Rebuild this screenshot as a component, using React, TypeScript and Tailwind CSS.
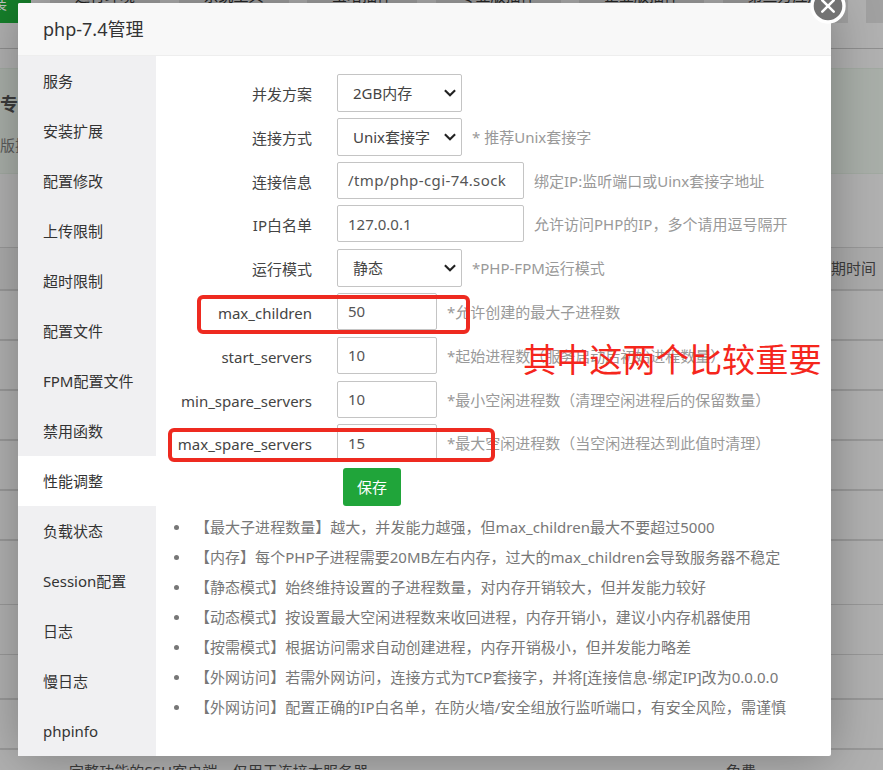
import { ReactNode } from 'react'

const MENU = [
  '服务', '安装扩展', '配置修改', '上传限制', '超时限制', '配置文件', 'FPM配置文件',
  '禁用函数', '性能调整', '负载状态', 'Session配置', '日志', '慢日志', 'phpinfo',
]

const TABS = [
  { name: '运行环境', className: 'w-[110px]' },
  { name: '系统工具', className: 'w-[110px]' },
  { name: '宝塔插件', className: 'w-[110px]' },
  { name: '专业版插件', className: 'w-[125px]' },
  { name: '企业版插件', className: 'w-[125px]' },
  { name: '第三方应用', className: 'w-[125px]' },
  { name: '一键部署', className: 'w-[110px]' },
]

const TIPS = [
  '【最大子进程数量】越大，并发能力越强，但max_children最大不要超过5000',
  '【内存】每个PHP子进程需要20MB左右内存，过大的max_children会导致服务器不稳定',
  '【静态模式】始终维持设置的子进程数量，对内存开销较大，但并发能力较好',
  '【动态模式】按设置最大空闲进程数来收回进程，内存开销小，建议小内存机器使用',
  '【按需模式】根据访问需求自动创建进程，内存开销极小，但并发能力略差',
  '【外网访问】若需外网访问，连接方式为TCP套接字，并将[连接信息-绑定IP]改为0.0.0.0',
  '【外网访问】配置正确的IP白名单，在防火墙/安全组放行监听端口，有安全风险，需谨慎',
]

function Row({ label, hint, children }: { label: string; hint?: string; children: ReactNode }) {
  return (
    <div className="flex h-[43.8px] items-start whitespace-nowrap">
      <span className="w-[156px] text-right leading-10 text-[#444]">{label}</span>
      <div className="ml-[25px]">{children}</div>
      {hint && <span className="ml-2.5 leading-[38px] text-[#999]">{hint}</span>}
    </div>
  )
}

function Select({ value }: { value: string }) {
  return (
    <div className="flex h-[38px] w-[125px] items-center justify-between rounded-xs border border-[#c4c4c4] bg-white pr-[5px] pl-[15px] text-[#444]">
      {value}
      <svg width="12" height="8" viewBox="0 0 12 8" fill="none" stroke="#222" strokeWidth="2.1">
        <path d="M0.9 1.2L6 6.3L11.1 1.2" />
      </svg>
    </div>
  )
}

function Input({ value, className = 'w-[100px]' }: { value: string; className?: string }) {
  return (
    <div className={`flex h-[37px] items-center rounded-xs border border-[#c4c4c4] bg-white pl-2.5 text-[#555] ${className}`}>
      {value}
    </div>
  )
}

// Software list page behind the dialog
function Backdrop() {
  return (
    <div className="h-full bg-[#b1b1b1] text-[#3c3c3c]">
      <div className="flex h-[49px] items-start border-b border-[#8f8f8f]">
        <div className="flex h-[23px] w-[31px] shrink-0 items-start overflow-hidden bg-[#16802b]">
          <span className="-mt-[7px] -ml-[23px] leading-5 whitespace-nowrap text-[#c2c2c2]">安装</span>
        </div>
        <div className="ml-[19px] flex shrink-0 gap-[18.5px]">
          {TABS.map((tab) => (
            <div key={tab.name} className={`h-[23px] overflow-hidden bg-[#a1a1a1] text-center text-[#262626] ${tab.className}`}>
              <div className="-mt-[15px] leading-5">{tab.name}</div>
            </div>
          ))}
        </div>
      </div>
      <div className="mt-[19px] h-[106px] overflow-hidden border-y border-[#a2aaa2] bg-[#a9afa9]">
        <div className="pt-[23px] text-[18px] leading-6 font-bold">专业版</div>
        <div className="mt-[19px] leading-5 text-[#5c5c5c]">版插件</div>
      </div>
      <div className="mt-[73px] flex h-[44px] items-center justify-end border-t border-b-2 border-[#999] bg-[#acacac] pr-[7px]">
        到期时间
      </div>
      <div className="h-[50px] border-b-2 border-[#999]" />
      <div className="h-[50px] border-b-2 border-[#999]" />
      <div className="h-[50px] border-b-2 border-[#999]" />
      <div className="h-[50px] border-b-2 border-[#999]" />
      <div className="h-[50px] border-b-2 border-[#999]" />
      <div className="h-[64px] border-b border-[#999]" />
      <div className="h-[50px] border-b border-[#999]" />
      <div className="h-[45px] border-b-2 border-[#999]" />
      <div className="h-[50px] border-b-2 border-[#999]" />
      <div className="flex pt-[11px] pl-[69px] leading-5">
        <span className="w-[657px] tracking-[0.08px]">完整功能的SSH客户端，仅用于连接本服务器</span>
        <span>免费</span>
      </div>
    </div>
  )
}

function CloseButton() {
  return (
    <svg className="absolute -top-[15px] -right-[15px]" width="36" height="36" viewBox="0 0 36 36">
      <circle cx="18" cy="18" r="16" fill="#737373" stroke="#fff" strokeWidth="3.4" />
      <path d="M12.3 12.3l11.4 11.4M23.7 12.3L12.3 23.7" stroke="#fff" strokeWidth="2.5" strokeLinecap="round" />
    </svg>
  )
}

export default function App() {
  return (
    <div className="relative h-[770px] w-[883px] overflow-hidden font-['Noto_Sans','Noto_Sans_CJK_SC',sans-serif] text-[15px]">
      <Backdrop />

      <div className="absolute top-[3px] left-[18px] h-[753px] w-[813px] rounded-xs bg-white shadow-[1px_1px_50px_rgba(0,0,0,0.3)]">
        <div className="h-[53px] rounded-t-xs border-b border-[#eee] bg-[#f8f8f8] pl-[25px] text-[18px] leading-[52px] text-[#333]">
          php-7.4管理
        </div>
        <CloseButton />

        <div className="flex h-[700px]">
          <div className="w-[138px] shrink-0 bg-[#f0f0f2]">
            {MENU.map((item) => (
              <div
                key={item}
                className={`h-[50px] pl-[25px] leading-[50px] text-[#333] ${item === '性能调整' ? 'bg-white' : ''}`}
              >
                {item}
              </div>
            ))}
          </div>

          <div className="pt-[18.1px]">
            <Row label="并发方案"><Select value="2GB内存" /></Row>
            <Row label="连接方式" hint="* 推荐Unix套接字"><Select value="Unix套接字" /></Row>
            <Row label="连接信息" hint="绑定IP:监听端口或Uinx套接字地址">
              <Input value="/tmp/php-cgi-74.sock" className="w-[187px] tracking-[0.4px]" />
            </Row>
            <Row label="IP白名单" hint="允许访问PHP的IP，多个请用逗号隔开">
              <Input value="127.0.0.1" className="w-[187px]" />
            </Row>
            <Row label="运行模式" hint="*PHP-FPM运行模式"><Select value="静态" /></Row>
            <Row label="max_children" hint="*允许创建的最大子进程数"><Input value="50" /></Row>
            <Row label="start_servers" hint="*起始进程数（服务启动后初始进程数量）"><Input value="10" /></Row>
            <Row label="min_spare_servers" hint="*最小空闲进程数（清理空闲进程后的保留数量）"><Input value="10" /></Row>
            <Row label="max_spare_servers" hint="*最大空闲进程数（当空闲进程达到此值时清理）"><Input value="15" /></Row>
            <button className="ml-[187px] block h-[38px] w-[58px] rounded-[3px] bg-[#20a53a] text-white">保存</button>

            <ul className="mt-1.5 tracking-[0.03px] text-[#777]">
              {TIPS.map((tip) => (
                <li key={tip} className="flex h-[30px] items-center pl-[18px] whitespace-nowrap">
                  <span className="mr-4 h-[5px] w-[5px] rounded-full bg-[#777]" />
                  {tip}
                </li>
              ))}
            </ul>
          </div>
        </div>
      </div>

      {/* Hand-drawn annotations */}
      <div className="absolute top-[295px] left-[197px] h-[39px] w-[273px] rounded-md border-4 border-[#ee2a20]" />
      <div className="absolute top-[428px] left-[168px] h-[34px] w-[327px] rounded-md border-4 border-[#ee2a20]" />
      <div className="absolute top-[339px] left-[523px] text-[33.2px] leading-[42px] whitespace-nowrap text-[#f5261c]">
        其中这两个比较重要
      </div>
    </div>
  )
}
